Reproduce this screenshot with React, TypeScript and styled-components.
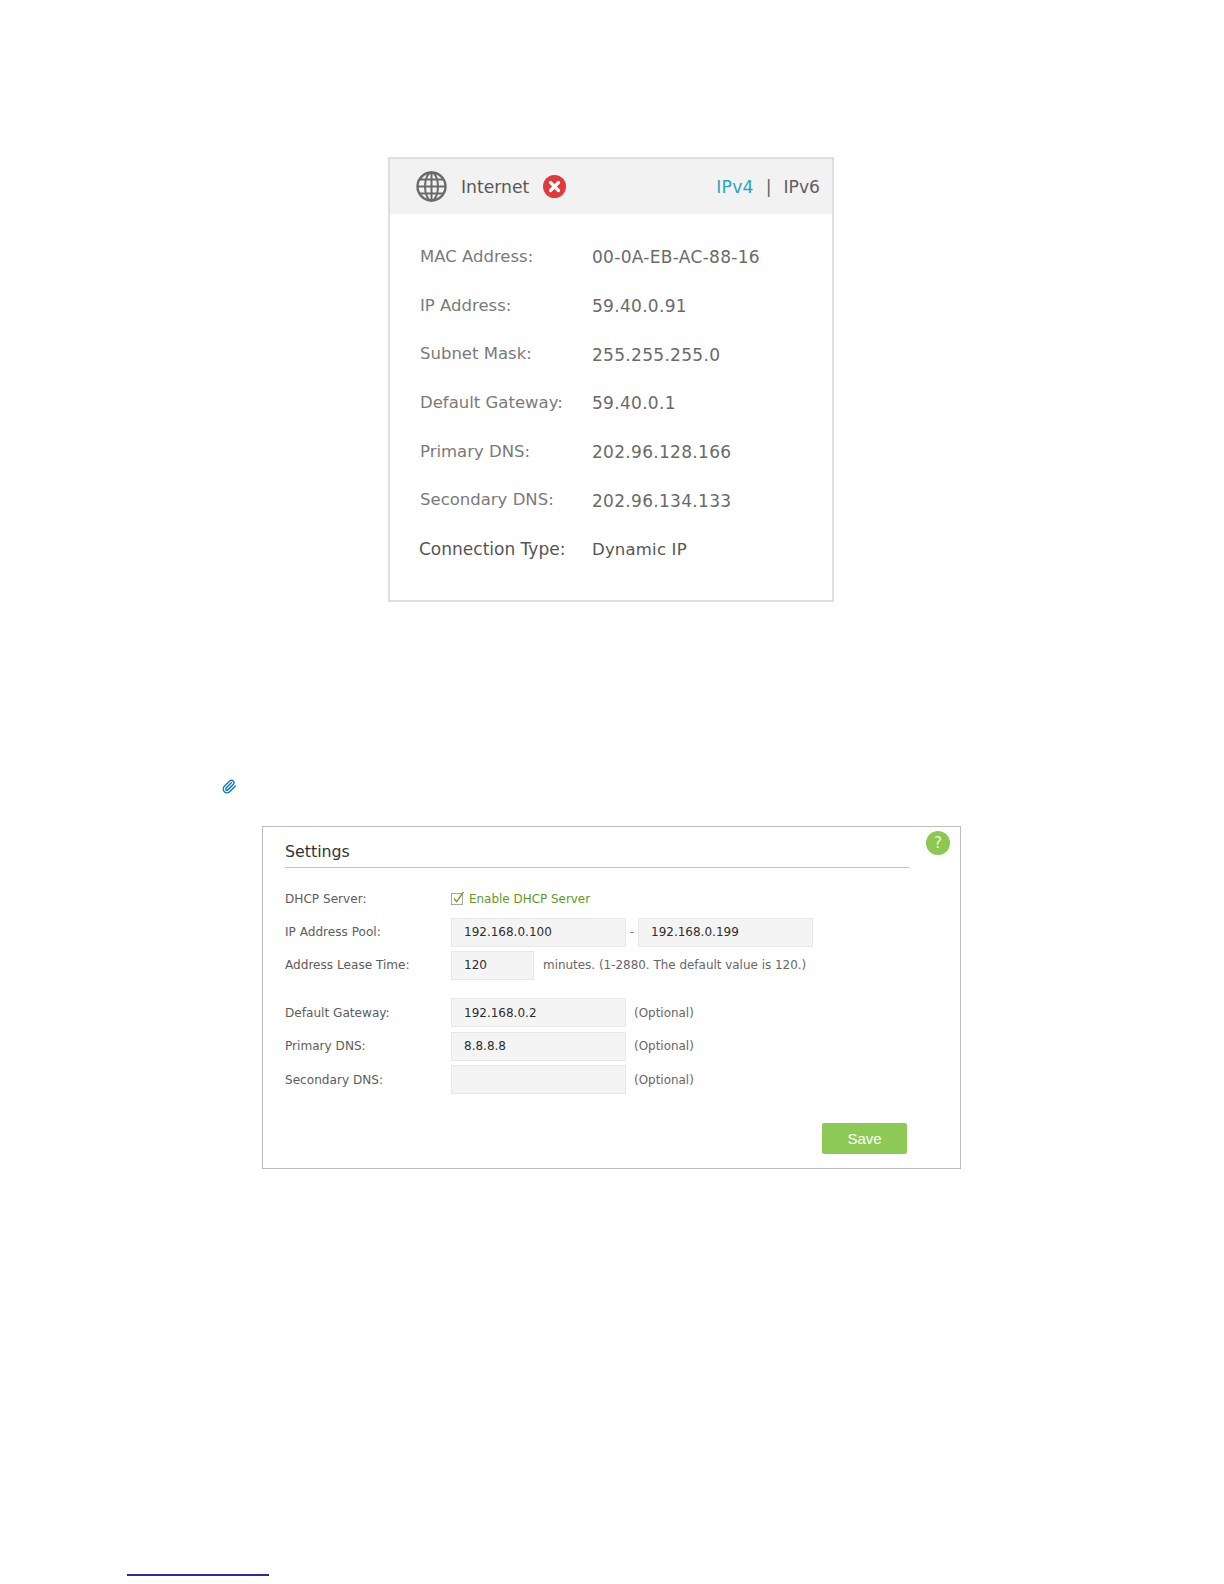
import React from "react";
import styled, { createGlobalStyle } from "styled-components";

const Global = createGlobalStyle`
  html, body { margin: 0; padding: 0; background: #fff; }
  body { font-family: "DejaVu Sans", Verdana, sans-serif; }
`;

const Page = styled.div`
  width: 1224px;
  height: 1584px;
  box-sizing: border-box;
  padding-top: 157px;
  display: flex;
  flex-direction: column;
  overflow: hidden;
`;

const StatusCard = styled.section`
  width: 446px;
  height: 445px;
  box-sizing: border-box;
  margin-left: 388px;
  border: 2px solid #dedede;
  background: #fff;
`;

const StatusHeader = styled.header`
  height: 55px;
  background: #f2f2f2;
  display: flex;
  align-items: center;
  padding: 0 12px 0 26px;
`;

const HeaderTitle = styled.span`
  font-size: 17.2px;
  color: #585858;
  margin-left: 14px;
`;

const ErrorDot = styled.span`
  margin-left: 14px;
  display: flex;
`;

const Protocols = styled.div`
  margin-left: auto;
  display: flex;
  gap: 12px;
  font-size: 17.2px;
`;

const Protocol = styled.span<{ $active?: boolean }>`
  color: ${(p) => (p.$active ? "#2aa3c4" : "#5f5f5f")};
  letter-spacing: ${(p) => (p.$active ? "0.2px" : "0")};
  font-weight: ${(p) => (p.$active ? 500 : 400)};
`;

const StatusList = styled.dl`
  margin: 0;
  padding: 19px 0 0 30px;
  display: flex;
  flex-direction: column;
`;

const StatusRow = styled.div`
  height: 48.7px;
  display: flex;
  align-items: center;
`;

const StatusLabel = styled.dt<{ $strong?: boolean }>`
  width: 172px;
  font-size: ${(p) => (p.$strong ? "17px" : "16.5px")};
  color: ${(p) => (p.$strong ? "#555" : "#7a7a7a")};
  transform: translate(${(p) => (p.$strong ? "-1px, 0" : "0, -1px")});
`;

const StatusValue = styled.dd<{ $strong?: boolean }>`
  margin: 0;
  font-size: ${(p) => (p.$strong ? "16.5px" : "17px")};
  letter-spacing: ${(p) => (p.$strong ? "0.2px" : "0.3px")};
  color: ${(p) => (p.$strong ? "#555" : "#6a6a6a")};
`;

const ClipRow = styled.div`
  margin: 177px 0 0 222px;
  height: 17px;
  display: flex;
`;

const SettingsCard = styled.section`
  position: relative;
  margin: 30px 0 0 262px;
  width: 699px;
  height: 343px;
  box-sizing: border-box;
  border: 1.5px solid #bdbdbd;
  padding: 10px 0 0 22px;
`;

const SettingsTitle = styled.h2`
  margin: 0;
  width: 624px;
  height: 31px;
  box-sizing: border-box;
  border-bottom: 1px solid #c4c4c4;
  font-size: 15.8px;
  font-weight: 400;
  color: #333;
  line-height: 29px;
`;

const HelpBadge = styled.span`
  position: absolute;
  top: 4px;
  right: 10px;
  width: 24px;
  height: 24px;
  border-radius: 50%;
  background: #8cc751;
  color: #eaf5dd;
  font-size: 15px;
  display: flex;
  align-items: center;
  justify-content: center;
`;

const Form = styled.div`
  display: flex;
  flex-direction: column;
  padding-top: 14px;
`;

const FormRow = styled.div<{ $gapTop?: number }>`
  display: flex;
  align-items: center;
  height: 33.4px;
  margin-top: ${(p) => p.$gapTop ?? 0}px;
`;

const FormLabel = styled.span`
  width: 166px;
  flex: none;
  font-size: 12.1px;
  color: #5c5c5c;
`;

const CheckWrap = styled.span`
  display: flex;
  align-items: center;
  gap: 4px;
  font-size: 11.95px;
  color: #5d9a22;
`;

const Field = styled.span<{ $w: number }>`
  width: ${(p) => p.$w}px;
  height: 29px;
  box-sizing: border-box;
  flex: none;
  background: #f4f4f4;
  border: 1px solid #e8e8e8;
  padding-left: 12px;
  display: flex;
  align-items: center;
  font-size: 12px;
  color: #2e2e2e;
`;

const Dash = styled.span`
  width: 12px;
  text-align: center;
  font-size: 12px;
  color: #777;
`;

const Hint = styled.span<{ $wide?: boolean }>`
  margin-left: ${(p) => (p.$wide ? 9 : 8)}px;
  font-size: 11.95px;
  color: #666;
`;

const FormFooter = styled.div`
  width: 624px;
  display: flex;
  justify-content: flex-end;
  margin-top: 27px;
`;

const SaveButton = styled.button`
  width: 85px;
  height: 31px;
  margin-right: 2px;
  border: 0;
  border-radius: 2px;
  background: #8dc957;
  color: #fff;
  font: 15px "Liberation Sans", Arial, sans-serif;
`;

const Footnote = styled.div`
  margin: 405px 0 0 127px;
  width: 142px;
  height: 2px;
  background: #2b2b9f;
`;

const Globe = () => (
  <svg width="31" height="31" viewBox="0 0 31 31" fill="none" stroke="#6a6a6a" strokeWidth="2">
    <circle cx="15.5" cy="15.5" r="14" strokeWidth="2.4" />
    <ellipse cx="15.5" cy="15.5" rx="6.5" ry="14" />
    <path d="M15.5 1.5v28M1.5 15.5h28M3.5 8.5h24M3.5 22.5h24" />
  </svg>
);

const ErrorIcon = () => (
  <svg width="23" height="23" viewBox="0 0 23 23">
    <circle cx="11.5" cy="11.5" r="11.5" fill="#e1393c" />
    <path d="M7.5 7.5l8 8M15.5 7.5l-8 8" stroke="#fff" strokeWidth="3.2" strokeLinecap="round" />
  </svg>
);

const Clip = () => (
  <svg width="15" height="15" viewBox="0 0 24 24" fill="none" stroke="#1578bd" strokeWidth="2.3" strokeLinecap="round" strokeLinejoin="round">
    <path d="m21.44 11.05-9.19 9.19a6 6 0 0 1-8.49-8.49l8.57-8.57A4 4 0 1 1 18 8.84l-8.59 8.57a2 2 0 0 1-2.83-2.83l8.49-8.48" />
  </svg>
);

const CheckBox = () => (
  <svg width="14" height="15" viewBox="0 0 14 15" fill="none">
    <rect x="0.5" y="2.5" width="11" height="11" stroke="#a8a8a8" />
    <path d="M3 7.5l2.6 3.2L12.5 1" stroke="#6da32f" strokeWidth="1.3" />
  </svg>
);

const statusRows = [
  ["MAC Address:", "00-0A-EB-AC-88-16"],
  ["IP Address:", "59.40.0.91"],
  ["Subnet Mask:", "255.255.255.0"],
  ["Default Gateway:", "59.40.0.1"],
  ["Primary DNS:", "202.96.128.166"],
  ["Secondary DNS:", "202.96.134.133"],
];

export default function App() {
  return (
    <Page>
      <Global />
      <StatusCard>
        <StatusHeader>
          <Globe />
          <HeaderTitle>Internet</HeaderTitle>
          <ErrorDot>
            <ErrorIcon />
          </ErrorDot>
          <Protocols>
            <Protocol $active>IPv4</Protocol>
            <Protocol>|</Protocol>
            <Protocol>IPv6</Protocol>
          </Protocols>
        </StatusHeader>
        <StatusList>
          {statusRows.map(([label, value]) => (
            <StatusRow key={label}>
              <StatusLabel>{label}</StatusLabel>
              <StatusValue>{value}</StatusValue>
            </StatusRow>
          ))}
          <StatusRow>
            <StatusLabel $strong>Connection Type:</StatusLabel>
            <StatusValue $strong>Dynamic IP</StatusValue>
          </StatusRow>
        </StatusList>
      </StatusCard>
      <ClipRow>
        <Clip />
      </ClipRow>
      <SettingsCard>
        <SettingsTitle>Settings</SettingsTitle>
        <HelpBadge>?</HelpBadge>
        <Form>
          <FormRow>
            <FormLabel>DHCP Server:</FormLabel>
            <CheckWrap>
              <CheckBox />
              Enable DHCP Server
            </CheckWrap>
          </FormRow>
          <FormRow>
            <FormLabel>IP Address Pool:</FormLabel>
            <Field $w={175}>192.168.0.100</Field>
            <Dash>-</Dash>
            <Field $w={175}>192.168.0.199</Field>
          </FormRow>
          <FormRow>
            <FormLabel>Address Lease Time:</FormLabel>
            <Field $w={83}>120</Field>
            <Hint $wide>minutes. (1-2880. The default value is 120.)</Hint>
          </FormRow>
          <FormRow $gapTop={14}>
            <FormLabel>Default Gateway:</FormLabel>
            <Field $w={175}>192.168.0.2</Field>
            <Hint>(Optional)</Hint>
          </FormRow>
          <FormRow>
            <FormLabel>Primary DNS:</FormLabel>
            <Field $w={175}>8.8.8.8</Field>
            <Hint>(Optional)</Hint>
          </FormRow>
          <FormRow>
            <FormLabel>Secondary DNS:</FormLabel>
            <Field $w={175} />
            <Hint>(Optional)</Hint>
          </FormRow>
          <FormFooter>
            <SaveButton>Save</SaveButton>
          </FormFooter>
        </Form>
      </SettingsCard>
      <Footnote />
    </Page>
  );
}
